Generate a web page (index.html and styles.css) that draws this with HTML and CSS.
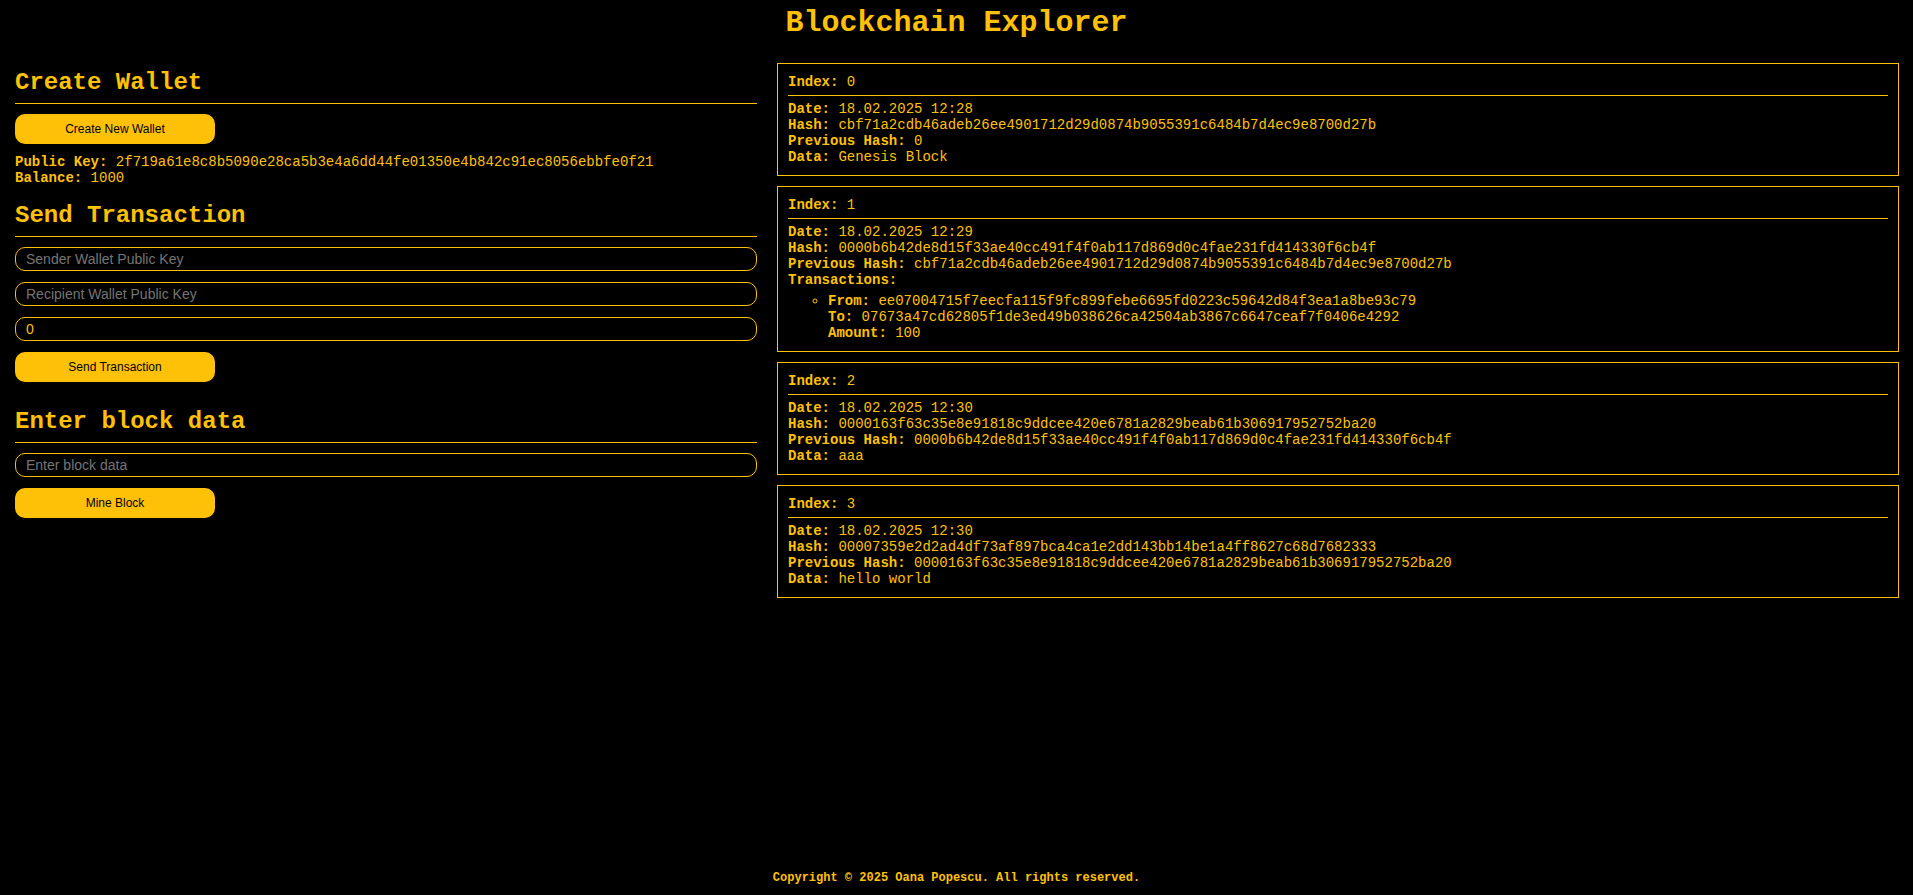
FILE: index.html
```html
<!DOCTYPE html>
<html lang="en">
<head>
<meta charset="utf-8">
<title>Blockchain Explorer</title>
<link rel="stylesheet" href="styles.css">
</head>
<body>
<h1 class="title">Blockchain Explorer</h1>
<main class="layout">
  <section class="panel">
    <h2 class="section-title">Create Wallet</h2>
    <button class="btn">Create New Wallet</button>
    <p class="info"><strong>Public Key:</strong> 2f719a61e8c8b5090e28ca5b3e4a6dd44fe01350e4b842c91ec8056ebbfe0f21</p>
    <p class="info"><strong>Balance:</strong> 1000</p>

    <h2 class="section-title">Send Transaction</h2>
    <input class="field" type="text" placeholder="Sender Wallet Public Key">
    <input class="field" type="text" placeholder="Recipient Wallet Public Key">
    <input class="field" type="number" value="0">
    <button class="btn">Send Transaction</button>

    <h2 class="section-title">Enter block data</h2>
    <input class="field" type="text" placeholder="Enter block data">
    <button class="btn">Mine Block</button>
  </section>

  <section class="chain">
    <article class="block">
      <div class="line"><strong>Index:</strong> 0</div>
      <hr class="divider">
      <div class="line"><strong>Date:</strong> 18.02.2025 12:28</div>
      <div class="line"><strong>Hash:</strong> cbf71a2cdb46adeb26ee4901712d29d0874b9055391c6484b7d4ec9e8700d27b</div>
      <div class="line"><strong>Previous Hash:</strong> 0</div>
      <div class="line"><strong>Data:</strong> Genesis Block</div>
    </article>
    <article class="block">
      <div class="line"><strong>Index:</strong> 1</div>
      <hr class="divider">
      <div class="line"><strong>Date:</strong> 18.02.2025 12:29</div>
      <div class="line"><strong>Hash:</strong> 0000b6b42de8d15f33ae40cc491f4f0ab117d869d0c4fae231fd414330f6cb4f</div>
      <div class="line"><strong>Previous Hash:</strong> cbf71a2cdb46adeb26ee4901712d29d0874b9055391c6484b7d4ec9e8700d27b</div>
      <div class="line"><strong>Transactions:</strong></div>
      <ul class="tx-list">
        <li>
          <div class="line"><strong>From:</strong> ee07004715f7eecfa115f9fc899febe6695fd0223c59642d84f3ea1a8be93c79</div>
          <div class="line"><strong>To:</strong> 07673a47cd62805f1de3ed49b038626ca42504ab3867c6647ceaf7f0406e4292</div>
          <div class="line"><strong>Amount:</strong> 100</div>
        </li>
      </ul>
    </article>
    <article class="block">
      <div class="line"><strong>Index:</strong> 2</div>
      <hr class="divider">
      <div class="line"><strong>Date:</strong> 18.02.2025 12:30</div>
      <div class="line"><strong>Hash:</strong> 0000163f63c35e8e91818c9ddcee420e6781a2829beab61b306917952752ba20</div>
      <div class="line"><strong>Previous Hash:</strong> 0000b6b42de8d15f33ae40cc491f4f0ab117d869d0c4fae231fd414330f6cb4f</div>
      <div class="line"><strong>Data:</strong> aaa</div>
    </article>
    <article class="block">
      <div class="line"><strong>Index:</strong> 3</div>
      <hr class="divider">
      <div class="line"><strong>Date:</strong> 18.02.2025 12:30</div>
      <div class="line"><strong>Hash:</strong> 00007359e2d2ad4df73af897bca4ca1e2dd143bb14be1a4ff8627c68d7682333</div>
      <div class="line"><strong>Previous Hash:</strong> 0000163f63c35e8e91818c9ddcee420e6781a2829beab61b306917952752ba20</div>
      <div class="line"><strong>Data:</strong> hello world</div>
    </article>
  </section>
</main>
<footer class="footer">Copyright © 2025 Oana Popescu. All rights reserved.</footer>
</body>
</html>
```

FILE: styles.css
```css
* {
  box-sizing: border-box;
}

html, body {
  background: #000;
}

body {
  margin: 0;
  min-height: 100vh;
  display: flex;
  flex-direction: column;
  color: #ffc107;
  font-family: "Liberation Mono", "Courier New", monospace;
  font-size: 14px;
  line-height: 16px;
}

.title {
  margin: 6px 0 13px;
  font-size: 30px;
  line-height: 34px;
  font-weight: bold;
  text-align: center;
}

.layout {
  display: grid;
  grid-template-columns: 742fr 1122fr;
  column-gap: 20px;
  padding: 0 14px 0 15px;
  align-items: start;
}

.panel {
  display: flex;
  flex-direction: column;
  align-items: stretch;
  min-width: 0;
}

.section-title {
  margin: 16px 0 10px;
  padding-bottom: 6px;
  border-bottom: 1px solid #ffc107;
  font-size: 24px;
  line-height: 28px;
  font-weight: bold;
}

.btn {
  align-self: flex-start;
  width: 200px;
  height: 30px;
  margin: 0 0 10px;
  padding: 0;
  border: none;
  border-radius: 10px;
  background: #ffc107;
  color: #000;
  font-family: "Liberation Sans", Arial, sans-serif;
  font-size: 12px;
  cursor: pointer;
}

.info {
  margin: 0;
  white-space: nowrap;
}

.field {
  display: block;
  width: 100%;
  height: 24px;
  margin: 0 0 11px;
  padding: 0 10px;
  border: 1px solid #ffc107;
  border-radius: 10px;
  background: #000;
  color: #ffc107;
  font-family: "Liberation Sans", Arial, sans-serif;
  font-size: 14px;
  outline: none;
}

.field::placeholder {
  color: #757575;
}

.field::-webkit-outer-spin-button,
.field::-webkit-inner-spin-button {
  -webkit-appearance: none;
  margin: 0;
}

.chain {
  display: flex;
  flex-direction: column;
  gap: 10px;
  padding-top: 10px;
  min-width: 0;
}

.block {
  border: 1px solid #ffc107;
  padding: 10px;
}

.line {
  white-space: nowrap;
}

.divider {
  margin: 5px 0;
  height: 0;
  border: none;
  border-top: 1px solid #ffc107;
}

.tx-list {
  margin: 5px 0 0;
  padding-left: 40px;
  list-style-type: circle;
}

.footer {
  margin-top: auto;
  padding-bottom: 10px;
  text-align: center;
  font-size: 12px;
  line-height: 14px;
  font-weight: bold;
}
```
